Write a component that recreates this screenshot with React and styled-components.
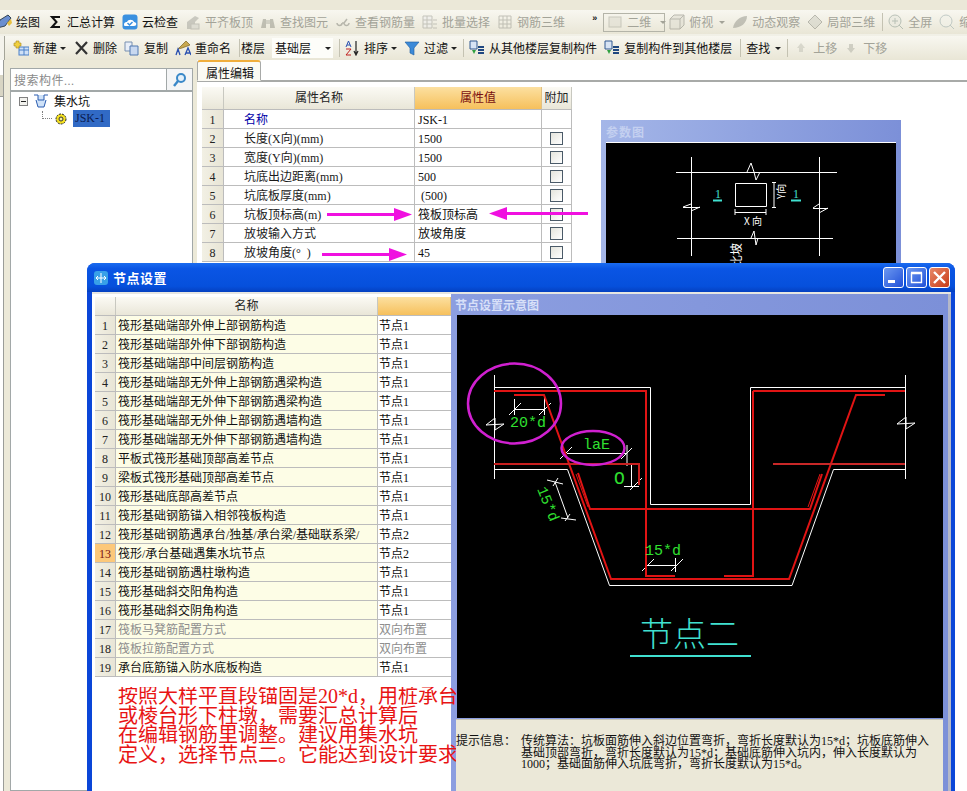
import styled, { createGlobalStyle } from "styled-components";

const GlobalStyle = createGlobalStyle`
  html, body {
    margin: 0;
    padding: 0;
    background: #fff;
  }
  * {
    box-sizing: border-box;
  }
  body {
    font-family: "Liberation Serif", "Noto Sans CJK SC", serif;
    font-size: 12px;
    color: #111;
  }
`;

const Page = styled.div`
  position: relative;
  width: 967px;
  height: 791px;
  overflow: hidden;
  display: flex;
  flex-direction: column;
`;

const TopBand = styled.div`
  height: 10px;
  background: #ebe8d8;
`;

const ToolRow = styled.div`
  display: flex;
  align-items: center;
  height: ${(p) => p.$h}px;
  overflow: hidden;
  white-space: nowrap;
  background: linear-gradient(#f8f7f0, #e9e6d6);
  border-bottom: ${(p) => p.$below || 0}px solid #f1f0e6;
`;

const Grip = styled.div`
  flex: none;
  width: 5px;
  height: 100%;
  background: #f4f3ec;
  border-right: 1px solid #a4a498;
`;

const ToolItem = styled.div`
  flex: none;
  display: flex;
  align-items: center;
  gap: 4px;
  margin-left: ${(p) => p.$ml}px;
  color: ${(p) => (p.$off ? "#a3a398" : "#111")};
`;

const Glyph = styled.svg`
  flex: none;
  width: 16px;
  height: 16px;
  opacity: ${(p) => (p.$off ? 0.55 : 1)};
`;

const Caret = styled.i`
  flex: none;
  width: 0;
  height: 0;
  margin-left: ${(p) => p.$ml}px;
  border-left: 3px solid transparent;
  border-right: 3px solid transparent;
  border-top: 3px solid ${(p) => (p.$off ? "#a3a398" : "#222")};
`;

const Sep = styled.div`
  flex: none;
  width: 1px;
  height: 18px;
  margin-left: ${(p) => p.$ml}px;
  background: #c4c2b2;
`;

const Chevrons = styled.span`
  flex: none;
  width: 6px;
  margin-left: 27px;
  margin-top: -8px;
  font: bold 9px "Liberation Sans", sans-serif;
  color: #111;
`;

const ViewCombo = styled.div`
  flex: none;
  display: flex;
  align-items: center;
  gap: 4px;
  width: 62px;
  height: 19px;
  margin-left: 5px;
  padding-left: 3px;
  border: 1px solid #b4b4a8;
  color: #a3a398;
`;

const FloorCombo = styled.div`
  flex: none;
  display: flex;
  align-items: center;
  justify-content: space-between;
  width: 61px;
  height: 20px;
  margin-left: 7px;
  padding: 0 2px 0 3px;
  background: #fdfdf9;
`;

const Workspace = styled.div`
  flex: 1;
  display: flex;
  min-height: 0;
`;

const LeftStrip = styled.div`
  flex: none;
  width: 10px;
  background: #ece9d8;
`;

const Rail = styled.div`
  width: 4px;
  height: 100%;
  padding-top: 15px;
  background: #fff;
  border-right: 1px solid #9a9c98;
`;

const RailTab = styled.div`
  height: 22px;
  background: #d8d5c4;
  border-bottom: 1px solid #9a9c98;
`;

const Sidebar = styled.div`
  flex: none;
  width: 187px;
  display: flex;
  flex-direction: column;
  padding: 8px 4px 0 0;
  background: #ece9d8;
`;

const SearchRow = styled.div`
  display: flex;
  height: 24px;
  background: #f4f5f6;
  border: 1px solid #a2a8a8;
  border-bottom-width: 2px;
`;

const SearchInput = styled.div`
  flex: 1;
  padding: 2px 0 0 3px;
  color: #8a8a8a;
  background: #fff;
  border-right: 1px solid #a2a8a8;
  font-size: 12px;
  letter-spacing: 0.5px;
`;

const SearchButton = styled.div`
  flex: none;
  width: 25px;
  display: flex;
  align-items: center;
  justify-content: center;
`;

const Tree = styled.div`
  flex: 1;
  padding-top: 0;
  background: #fff;
  border: 1px solid #a2a8a8;
  border-top: none;
`;

const TreeRow = styled.div`
  display: flex;
  align-items: center;
  height: ${(p) => p.$h}px;
  padding-left: ${(p) => p.$pad}px;
  gap: ${(p) => p.$gap}px;
`;

const PlusBox = styled.span`
  position: relative;
  flex: none;
  width: 9px;
  height: 9px;
  border: 1px solid #808080;
  background: #f2f2ee;
  &::after {
    content: "";
    position: absolute;
    left: 1px;
    top: 3px;
    width: 5px;
    height: 1px;
    background: #222;
  }
`;

const TreeDots = styled.span`
  flex: none;
  width: 10px;
  height: 8px;
  margin-top: -8px;
  border-left: 1px dotted #808080;
  border-bottom: 1px dotted #808080;
`;

const TreePick = styled.span`
  flex: none;
  width: 37px;
  height: 17px;
  margin-left: 3px;
  padding-left: 2px;
  line-height: 17px;
  color: #0b1c52;
  background: #316ac5;
`;

const Main = styled.div`
  flex: 1;
  min-width: 0;
  display: flex;
  flex-direction: column;
  background: #fff;
`;

const TabBar = styled.div`
  flex: none;
  display: flex;
  align-items: flex-end;
  height: 22px;
  border-bottom: 2px solid #a8aaa8;
`;

const Tab = styled.div`
  width: 64px;
  height: 21px;
  margin-bottom: -1px;
  padding: 2px 0 0 8px;
  background: #fbfaf3;
  border: 1px solid #a8aaa8;
  border-top: 2px solid #f0ae3c;
  border-bottom: 1px solid #fbfaf3;
  border-radius: 3px 3px 0 0;
`;

const PropTable = styled.div`
  width: 370px;
  margin: 5px 0 0 5px;
`;

const Row = styled.div`
  display: grid;
  grid-template-columns: ${(p) => p.$cols};
  grid-template-rows: ${(p) => (p.$headH || 19) - 1}px;
  height: ${(p) => p.$headH || 19}px;
  border-bottom: 1px solid #bcbcbc;
  line-height: 20px;
`;

const IndexCell = styled.div`
  text-align: center;
  color: ${(p) => (p.$on ? "#7a1010" : "#222")};
  background: ${(p) =>
    p.$on ? "#fcc87a" : "linear-gradient(90deg, #f2f0e4, #e8e5d6)"};
  border-right: 1px solid #bcbcbc;
`;

const HeadCell = styled.div`
  display: flex;
  align-items: center;
  justify-content: center;
  color: ${(p) => (p.$hot ? "#7a1010" : "#222")};
  background: ${(p) =>
    p.$hot
      ? "linear-gradient(#fce0a0, #f6c05c)"
      : "linear-gradient(#fbfaf4, #e9e6d8)"};
  border-right: 1px solid ${(p) => (p.$hot ? "#e0c080" : "#c8c8c0")};
`;

const NameCell = styled.div`
  padding-left: 20px;
  color: ${(p) => (p.$blue ? "#0000a8" : "#1a1a1a")};
  border-right: 1px solid #bcbcbc;
`;

const ValueCell = styled.div`
  padding-left: 3px;
  border-right: 1px solid #bcbcbc;
`;

const CheckCell = styled.div`
  display: flex;
  align-items: center;
  justify-content: center;
  border-right: 1px solid #bcbcbc;
`;

const CheckBox = styled.span`
  width: 13px;
  height: 13px;
  border: 1px solid #4a5a68;
  background: linear-gradient(135deg, #e4e4dc, #fff);
`;

const ArrowMark = styled.svg`
  position: absolute;
  left: ${(p) => p.$x}px;
  top: ${(p) => p.$y}px;
  z-index: 3;
`;

const ParamWindow = styled.div`
  position: absolute;
  left: 601px;
  top: 120px;
  width: 300px;
  height: 150px;
  padding: 0 5px 0 5px;
  background: linear-gradient(90deg, #a4b6e8, #7c90d8);
  z-index: 2;
`;

const ParamTitle = styled.div`
  height: 22px;
  padding-top: 3px;
  font-weight: bold;
  color: #c4d0f0;
  letter-spacing: 1px;
`;

const BlackSvg = styled.svg`
  display: block;
  background: #000;
`;

const Dialog = styled.div`
  position: absolute;
  left: 87px;
  top: 263px;
  width: 868px;
  height: 540px;
  display: flex;
  flex-direction: column;
  padding: 0 4px 0 5px;
  border-radius: 8px 8px 0 0;
  background: #0a46d8;
  z-index: 4;
`;

const TitleBar = styled.div`
  flex: none;
  display: flex;
  align-items: center;
  height: 29px;
  margin: 0 -4px 0 -5px;
  padding: 0 5px 0 6px;
  border-radius: 8px 8px 0 0;
  background: linear-gradient(#1a6cf0, #0a55e4 20%, #0650dc 80%, #0440c0);
`;

const TitleText = styled.span`
  flex: 1;
  margin-left: 4px;
  font: bold 13px "Noto Sans CJK SC", sans-serif;
  letter-spacing: 0.5px;
  color: #fff;
`;

const WinButtons = styled.div`
  display: flex;
  gap: 2px;
`;

const WinButton = styled.div`
  position: relative;
  width: 21px;
  height: 21px;
  border: 1px solid #fff;
  border-radius: 3px;
  background: ${(p) =>
    p.$close
      ? "linear-gradient(135deg, #e88868, #c83c18)"
      : "linear-gradient(135deg, #6c98f0, #2050d8)"};
`;

const Client = styled.div`
  flex: 1;
  display: flex;
  min-height: 0;
  padding-top: 2px;
  background: #e6e6e2;
`;

const LeftCol = styled.div`
  flex: none;
  width: 359px;
  padding: 3px 0 0 3px;
  background: #fff;
`;

const NodeIndex = styled(IndexCell)``;

const NodeName = styled.div`
  padding-left: 2px;
  white-space: nowrap;
  overflow: hidden;
  color: ${(p) => (p.$off ? "#8e8e8e" : "#111")};
  background: #fdfde6;
  border-right: 1px solid #bcbcbc;
`;

const NodeValue = styled.div`
  padding-left: 1px;
  color: ${(p) => (p.$off ? "#8e8e8e" : "#111")};
  background: #fff;
`;

const Note = styled.div`
  position: relative;
  z-index: 2;
  width: 338px;
  margin: 10px 0 0 23px;
  overflow: hidden;
  white-space: nowrap;
  font-size: 20px;
  line-height: 19.7px;
  color: #e81414;
`;

const RightPanel = styled.div`
  flex: 1;
  display: flex;
  flex-direction: column;
  padding: 0 5px 0 6px;
  background: linear-gradient(90deg, #8c9ee0, #7c90d8);
  border-right: 3px solid #b4b8c8;
`;

const PanelTitle = styled.div`
  flex: none;
  height: 21px;
  margin-left: -2px;
  padding-top: 2px;
  font-weight: bold;
  color: #d8e0f8;
`;

const Hint = styled.div`
  flex: 1;
  display: flex;
  margin: 1px 0 0 -1px;
  padding-top: 16px;
  background: #ebe8d8;
  border-top: 1px solid #c8c6b8;
  line-height: 11.7px;
  white-space: nowrap;
`;

const HintLabel = styled.div`
  flex: none;
  width: 65px;
`;

const icons = {
  draw: (
    <>
      <path d="M1 14l3-8 8-5 3 3-6 8z" fill="#6a8ed0" stroke="#345" />
      <path d="M11 9l4-4 1 4-3 3z" fill="#e8c040" />
    </>
  ),
  sigma: <path d="M13 3H5l4.5 5L5 13h8" fill="none" stroke="#111" strokeWidth="2" />,
  cloud: (
    <>
      <rect x="0.5" y="0.5" width="15" height="15" rx="3" fill="#3a90e0" />
      <path d="M2 11c0-3 2-3 3-3 1-3 6-3 7 0 3 0 3 4 0 4H4c-1 0-2 0-2-1z" fill="#fff" />
      <path d="M5.5 9l2 2 3-3" fill="none" stroke="#3a90e0" strokeWidth="1.5" />
    </>
  ),
  align: (
    <>
      <path d="M2 15V8l8-6 4 2-4 4v7z" fill="#a8a8a0" />
      <rect x="6" y="10" width="8" height="5" fill="#d0d0c8" stroke="#a0a098" />
    </>
  ),
  binoculars: (
    <>
      <path d="M1 14l2-9h3v9zM10 14V5h3l2 9z" fill="#98988c" />
      <rect x="6" y="6" width="4" height="4" fill="#b8b8ac" />
    </>
  ),
  glasses: (
    <path d="M2 9a2.500 2.500 0 1 0 5 0M9 9a2.500 2.500 0 1 0 5 0M7 9h2M9 9l3-4" fill="none" stroke="#8a8a80" strokeWidth="1.5" />
  ),
  batch: (
    <path d="M1 2h9v12H1zM1 6h9M1 10h9M5 2v12M11 6h4M11 10h4M11 14h4" fill="#eee" stroke="#a0a098" />
  ),
  grid3d: <path d="M2 2h12v12H2zM6 2v12M10 2v12M2 6h12M2 10h12" fill="none" stroke="#9a9a90" />,
  cube: <path d="M1 5l4-4h10v10l-4 4H1zM1 5h10v10M11 5l4-4" fill="#dedcd0" stroke="#8a8a80" />,
  orbit: <path d="M1 14C2 7 8 2 15 2c0 7-6 12-14 12z" fill="#9a9a90" />,
  local3d: <path d="M8 1l7 7-7 7-7-7z" fill="#d0d0c4" stroke="#8a8a80" />,
  zoom: (
    <>
      <circle cx="7" cy="7" r="6" fill="#e8e8de" stroke="#8a9a90" />
      <path d="M4 7h6M7 4v6M11 11l4 4" fill="none" stroke="#8a9a90" />
    </>
  ),
  shrink: (
    <>
      <circle cx="7" cy="7" r="6" fill="#f2f2ea" stroke="#9aa" />
      <path d="M11 11l4 4" stroke="#9aa" />
    </>
  ),
  add: (
    <>
      <rect x="6" y="7" width="10" height="8" fill="#cfe0f6" stroke="#4a80c8" />
      <path d="M6 10h10M11 7v8" stroke="#4a80c8" />
      <path d="M3 1h3v2h2v3H6v2H3V6H1V3h2z" fill="#f0d040" stroke="#a88820" strokeWidth="0.6" />
    </>
  ),
  del: <path d="M3 2l11 12M14 2L3 14" stroke="#333" strokeWidth="2.2" />,
  copy: (
    <>
      <path d="M1 2h7v9H1z" fill="#e8eef8" stroke="#7890b0" />
      <path d="M6 6h8v9H6z" fill="#c8d8f0" stroke="#5078b0" />
    </>
  ),
  rename: (
    <>
      <path d="M3 9l8-8 4 4-8 3z" fill="#c8a850" stroke="#786020" strokeWidth="0.7" />
      <path d="M1 15l2-6 2 6M10 15l3-7 3 7M11 13h4" fill="none" stroke="#2a50b0" strokeWidth="1.3" />
    </>
  ),
  sort: (
    <>
      <path d="M2 7l2.500-6L7 7M3 5h3" fill="none" stroke="#2a50b0" />
      <path d="M2 9h5l-5 6h5" fill="none" stroke="#c02020" />
      <path d="M12 1v13M10 11l2 4 2-4" fill="none" stroke="#222" strokeWidth="1.2" />
    </>
  ),
  filter: <path d="M1 2h14L10 8v7l-4-2V8z" fill="#3c8ad8" stroke="#1c5ca0" strokeWidth="0.6" />,
  floors: (
    <>
      <path d="M1 1h7v8H1z" fill="#d8e4f4" stroke="#305890" />
      <path d="M3 10h4l-2 4z" fill="#30a040" />
      <path d="M9 7h6M9 10h6M9 13h6" stroke="#204880" strokeWidth="2" />
    </>
  ),
  up: <path d="M8 3l4 5H10v4H6V8H4z" fill="#c4c4b8" />,
  down: <path d="M8 13l4-5H10V4H6v4H4z" fill="#b4b4a8" />,
  view2d: <rect x="2" y="3" width="12" height="10" fill="#dedcd0" stroke="#a8a89c" />,
  search: (
    <>
      <circle cx="9" cy="6" r="4" fill="#e4f0fa" stroke="#3a88c8" strokeWidth="2" />
      <path d="M6 9l-4 5" stroke="#3a88c8" strokeWidth="2.4" />
    </>
  ),
  pit: (
    <>
      <path d="M1 2h4v5h6V2h4M3 7l2 7h6l2-7" fill="#cfe2f8" stroke="#2a5cb0" />
    </>
  ),
  gear: (
    <>
      <circle cx="8" cy="8" r="5" fill="#f4e020" stroke="#222" strokeDasharray="2 1" />
      <circle cx="8" cy="8" r="2" fill="#f8f0a0" stroke="#333" />
    </>
  ),
  dialog: (
    <>
      <rect x="1" y="1" width="14" height="14" rx="3" fill="#38a0e8" />
      <path d="M8 3v10M3 8h10M5 6L3 8l2 2M11 6l2 2-2 2" fill="none" stroke="#fff" />
    </>
  ),
};

const Icon = ({ name, off }) => (
  <Glyph viewBox="0 0 16 16" $off={off}>
    {icons[name]}
  </Glyph>
);

const Tool = ({ icon, label, ml = 7, off, caret }) => (
  <>
    <ToolItem $ml={ml} $off={off}>
      {icon && <Icon name={icon} off={off} />}
      <span>{label}</span>
    </ToolItem>
    {caret && <Caret $ml={caret} $off={off} />}
  </>
);

const propRows = [
  ["名称", "JSK-1"],
  ["长度(X向)(mm)", "1500"],
  ["宽度(Y向)(mm)", "1500"],
  ["坑底出边距离(mm)", "500"],
  ["坑底板厚度(mm)", "\u00a0(500)"],
  ["坑板顶标高(m)", "筏板顶标高"],
  ["放坡输入方式", "放坡角度"],
  ["放坡角度(°\u00a0\u00a0)", "45"],
];

const nodeRows = [
  ["筏形基础端部外伸上部钢筋构造", "节点1"],
  ["筏形基础端部外伸下部钢筋构造", "节点1"],
  ["筏形基础端部中间层钢筋构造", "节点1"],
  ["筏形基础端部无外伸上部钢筋遇梁构造", "节点1"],
  ["筏形基础端部无外伸下部钢筋遇梁构造", "节点1"],
  ["筏形基础端部无外伸上部钢筋遇墙构造", "节点1"],
  ["筏形基础端部无外伸下部钢筋遇墙构造", "节点1"],
  ["平板式筏形基础顶部高差节点", "节点1"],
  ["梁板式筏形基础顶部高差节点", "节点1"],
  ["筏形基础底部高差节点", "节点1"],
  ["筏形基础钢筋锚入相邻筏板构造", "节点1"],
  ["筏形基础钢筋遇承台/独基/承台梁/基础联系梁/", "节点2"],
  ["筏形/承台基础遇集水坑节点", "节点2"],
  ["筏形基础钢筋遇柱墩构造", "节点1"],
  ["筏形基础斜交阳角构造", "节点1"],
  ["筏形基础斜交阴角构造", "节点1"],
  ["筏板马凳筋配置方式", "双向布置", true],
  ["筏板拉筋配置方式", "双向布置", true],
  ["承台底筋锚入防水底板构造", "节点1"],
];

const PROP_COLS = "22px 191px 127px 30px";
const NODE_COLS = "21px 262px 73px";

const Arrow = ({ x, y, w, flip }) => (
  <ArrowMark $x={x} $y={y} width={w} height="13" viewBox={`0 0 ${w} 13`}>
    <g transform={flip ? `translate(${w} 0) scale(-1 1)` : undefined} fill="#f010e0">
      <rect x="0" y="5" width={w - 16} height="3" />
      <path d={`M${w - 18} 0L${w} 6.500L${w - 18} 13z`} />
    </g>
  </ArrowMark>
);

const ParamDrawing = () => (
  <BlackSvg width="290" height="128" viewBox="606 142 290 128">
    <path d="M606 142.500H896" stroke="#fff" />
    <g fill="none" stroke="#fff">
      <path d="M676 172.500H837M677 238.500H833M691.500 157V256M819.500 157V256" />
      <path d="M735.500 183.500H766.500V206.500H735.500z" />
      <path d="M747 172l4-9 3 9 2 8 4-8" />
      <path d="M751 238l3-7 1 7 1 7 2-7" />
      <path d="M683 207.500H700M691 204l-8 3M691 211l9-4" />
      <path d="M813 208.500H828M819 204l-6 4M819 213l9-5" />
      <path d="M735 212.500H766M735 209v6M766 209v6M772 182.500h4M772 207.500h4M774 182V207" />
    </g>
    <g fill="#fff" fontSize="10" fontFamily="Noto Sans CJK SC, sans-serif">
      <text x="744" y="225">
        X 向
      </text>
      <text transform="translate(785 199) rotate(-90)">Y向</text>
      <text transform="translate(741 255) rotate(-90)" fontSize="12">
        坡
      </text>
      <text transform="translate(741 267) rotate(-90)" fontSize="12">
        比
      </text>
    </g>
    <g fill="#40e0d0" fontSize="12" fontFamily="Liberation Serif, serif">
      <text x="715" y="198">
        1
      </text>
      <text x="793" y="198">
        1
      </text>
    </g>
    <path d="M713 200.500H722M791 200.500H801" stroke="#40e0d0" strokeWidth="2" />
  </BlackSvg>
);

const NodeDrawing = () => (
  <BlackSvg width="486" height="403" viewBox="457 315 486 403">
    <g fill="none" stroke="#fff">
      <path d="M494.500 375V479M905.500 375V479" />
      <path d="M494 387.500H650.500V504.500H750.500V387.500H905" />
      <path d="M494 469.500H567.500L609.500 585.500H792L833.500 469.500H905" />
      <path d="M486 425l9-7v12l9-6zM897 424l9-7v12l9-6z" />
      <path d="M514 409.500H544M514.500 399V415M544.500 395V415M509 415l12-12M539 415l12-12" />
      <path d="M567 453.500H627M560 459l12-12M621 459l11-11M627 445V466" />
      <path d="M631.500 464V486M624 486.500H639M630 490l12-12" />
      <path d="M555 482l13 36M547 480l16 4M561 518l15 2M553 486l5-8M565 521l5-7" />
      <path d="M647 565.500H676M642 571l12-12M671 571l12-12M675.500 558V572" />
    </g>
    <g fill="none" stroke="#e01414" strokeWidth="2">
      <path d="M494 391H646V576H675" />
      <path d="M514 395H544L611 579H789L856 395H885" />
      <path d="M494 464H639V485" stroke="#c82020" />
      <path d="M578 473L590 509H810L822 474" />
      <path d="M576 474L588 507" strokeWidth="1" />
      <path d="M753 391H905M753 391V576H724" />
      <path d="M773 464H905" stroke="#c82828" />
      <path d="M820 474L808 507" strokeWidth="1" />
    </g>
    <ellipse cx="514.500" cy="403.500" rx="46.500" ry="40" fill="none" stroke="#d020d0" strokeWidth="2.500" />
    <ellipse cx="593" cy="448" rx="31.500" ry="17" fill="none" stroke="#d020d0" strokeWidth="2.500" />
    <g fill="#30e030" fontSize="15" fontFamily="Liberation Mono, monospace">
      <text x="510" y="427">
        20*d
      </text>
      <text x="583" y="449">
        laE
      </text>
      <text x="614" y="484" fontSize="18">
        O
      </text>
      <text x="645" y="555">
        15*d
      </text>
      <text transform="translate(537 489) rotate(68)">15*d</text>
    </g>
    <text x="640" y="646" fill="#40e0d0" fontSize="33" fontWeight="300" fontFamily="Noto Sans CJK SC, sans-serif">
      节点二
    </text>
    <path d="M630 656H751" stroke="#40e0d0" strokeWidth="2" />
  </BlackSvg>
);

export default function App() {
  return (
    <Page>
      <GlobalStyle />
      <TopBand />
      <ToolRow $h={26} $below={2}>
        <Tool icon="draw" label="绘图" ml={-4} />
        <Tool icon="sigma" label="汇总计算" />
        <Tool icon="cloud" label="云检查" />
        <Tool icon="align" label="平齐板顶" off />
        <Tool icon="binoculars" label="查找图元" off />
        <Tool icon="glasses" label="查看钢筋量" off />
        <Tool icon="batch" label="批量选择" off />
        <Tool icon="grid3d" label="钢筋三维" off />
        <Chevrons>»</Chevrons>
        <ViewCombo>
          <Icon name="view2d" off />
          <span>二维</span>
          <Caret $ml={5} $off />
        </ViewCombo>
        <Tool icon="cube" label="俯视" ml={4} off caret={6} />
        <Tool icon="orbit" label="动态观察" off />
        <Tool icon="local3d" label="局部三维" off />
        <Sep $ml={7} />
        <Tool icon="zoom" label="全屏" ml={5} off />
        <Tool icon="shrink" label="缩放" off />
      </ToolRow>
      <ToolRow $h={24}>
        <Grip />
        <Tool icon="add" label="新建" ml={8} caret={3} />
        <Tool icon="del" label="删除" />
        <Tool icon="copy" label="复制" />
        <Tool icon="rename" label="重命名" />
        <Sep $ml={8} />
        <Tool label="楼层" ml={1} />
        <FloorCombo>
          <span>基础层</span>
          <Caret $ml={0} />
        </FloorCombo>
        <Sep $ml={6} />
        <Tool icon="sort" label="排序" ml={4} caret={3} />
        <Tool icon="filter" label="过滤" caret={3} />
        <Sep $ml={6} />
        <Tool icon="floors" label="从其他楼层复制构件" ml={5} />
        <Tool icon="floors" label="复制构件到其他楼层" />
        <Sep $ml={8} />
        <Tool label="查找" ml={5} caret={5} />
        <Sep $ml={6} />
        <Tool icon="up" label="上移" ml={5} off />
        <Tool icon="down" label="下移" ml={6} off />
      </ToolRow>
      <Workspace>
        <LeftStrip>
          <Rail>
            <RailTab />
          </Rail>
        </LeftStrip>
        <Sidebar>
          <SearchRow>
            <SearchInput>搜索构件...</SearchInput>
            <SearchButton>
              <Icon name="search" />
            </SearchButton>
          </SearchRow>
          <Tree>
            <TreeRow $h={18} $pad={8} $gap={5}>
              <PlusBox />
              <Icon name="pit" />
              <span>集水坑</span>
            </TreeRow>
            <TreeRow $h={17} $pad={31} $gap={1}>
              <TreeDots />
              <Icon name="gear" />
              <TreePick>JSK-1</TreePick>
            </TreeRow>
          </Tree>
        </Sidebar>
        <Main>
          <TabBar>
            <Tab>属性编辑</Tab>
          </TabBar>
          <PropTable>
            <Row $cols={PROP_COLS} $headH={23}>
              <HeadCell />
              <HeadCell>属性名称</HeadCell>
              <HeadCell $hot>属性值</HeadCell>
              <HeadCell>附加</HeadCell>
            </Row>
            {propRows.map(([name, value], i) => (
              <Row key={name} $cols={PROP_COLS}>
                <IndexCell>{i + 1}</IndexCell>
                <NameCell $blue={i === 0}>{name}</NameCell>
                <ValueCell>{value}</ValueCell>
                <CheckCell>{i > 0 && <CheckBox />}</CheckCell>
              </Row>
            ))}
          </PropTable>
        </Main>
      </Workspace>

      <Arrow x={327} y={208} w={85} />
      <Arrow x={489} y={207} w={99} flip />
      <Arrow x={322} y={248} w={85} />

      <ParamWindow>
        <ParamTitle>参数图</ParamTitle>
        <ParamDrawing />
      </ParamWindow>

      <Dialog>
        <TitleBar>
          <Icon name="dialog" />
          <TitleText>节点设置</TitleText>
          <WinButtons>
            <WinButton>
              <svg width="19" height="19" viewBox="0 0 19 19">
                <rect x="4" y="12" width="7" height="3" fill="#fff" />
              </svg>
            </WinButton>
            <WinButton>
              <svg width="19" height="19" viewBox="0 0 19 19">
                <path d="M4.500 5.500h10v9h-10zM4 4.500h11" fill="none" stroke="#fff" strokeWidth="1.400" />
              </svg>
            </WinButton>
            <WinButton $close>
              <svg width="19" height="19" viewBox="0 0 19 19">
                <path d="M4 4l11 11M15 4L4 15" stroke="#fff" strokeWidth="2.400" />
              </svg>
            </WinButton>
          </WinButtons>
        </TitleBar>
        <Client>
          <LeftCol>
            <Row $cols={NODE_COLS}>
              <HeadCell />
              <HeadCell>名称</HeadCell>
              <HeadCell $hot />
            </Row>
            {nodeRows.map(([name, value, off], i) => (
              <Row key={name} $cols={NODE_COLS}>
                <NodeIndex $on={i === 12}>{i + 1}</NodeIndex>
                <NodeName $off={off}>{name}</NodeName>
                <NodeValue $off={off}>{value}</NodeValue>
              </Row>
            ))}
            <Note>
              <div>按照大样平直段锚固是20*d，用桩承台</div>
              <div>或棱台形下柱墩，需要汇总计算后</div>
              <div>在编辑钢筋里调整。建议用集水坑</div>
              <div>定义，选择节点二。它能达到设计要求</div>
            </Note>
          </LeftCol>
          <RightPanel>
            <PanelTitle>节点设置示意图</PanelTitle>
            <NodeDrawing />
            <Hint>
              <HintLabel>提示信息：</HintLabel>
              <div>
                <div>传统算法：坑板面筋伸入斜边位置弯折，弯折长度默认为15*d；坑板底筋伸入</div>
                <div>基础顶部弯折，弯折长度默认为15*d；基础底筋伸入坑内，伸入长度默认为</div>
                <div>1000；基础面筋伸入坑底弯折，弯折长度默认为15*d。</div>
              </div>
            </Hint>
          </RightPanel>
        </Client>
      </Dialog>
    </Page>
  );
}
